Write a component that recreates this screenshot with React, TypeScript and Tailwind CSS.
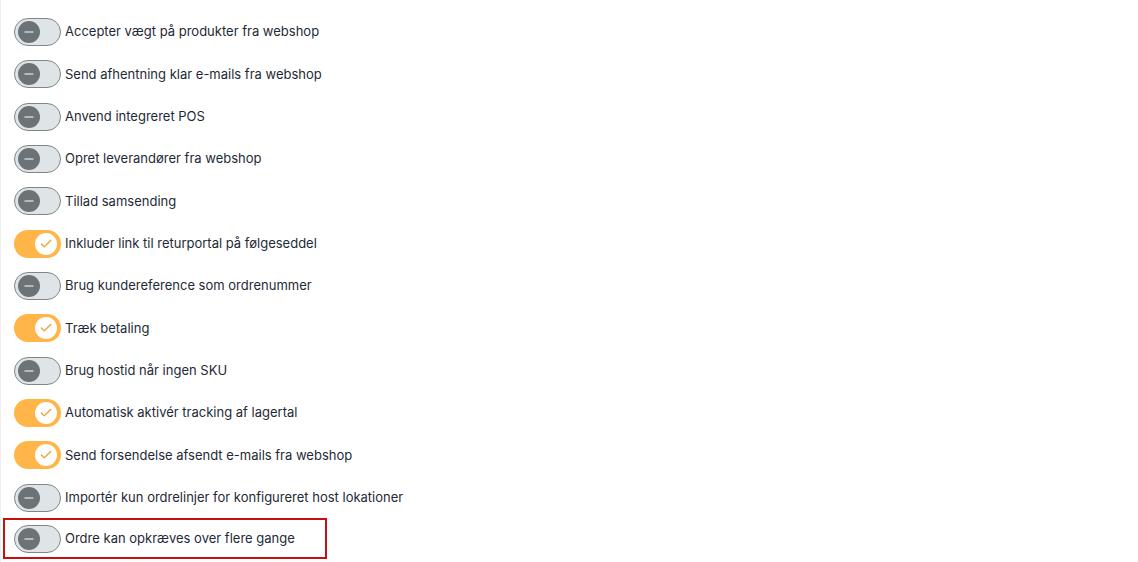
import { Check, Minus } from "lucide-react";

const settings = [
  { label: "Accepter vægt på produkter fra webshop", on: false },
  { label: "Send afhentning klar e-mails fra webshop", on: false },
  { label: "Anvend integreret POS", on: false },
  { label: "Opret leverandører fra webshop", on: false },
  { label: "Tillad samsending", on: false },
  { label: "Inkluder link til returportal på følgeseddel", on: true },
  { label: "Brug kundereference som ordrenummer", on: false },
  { label: "Træk betaling", on: true },
  { label: "Brug hostid når ingen SKU", on: false },
  { label: "Automatisk aktivér tracking af lagertal", on: true },
  { label: "Send forsendelse afsendt e-mails fra webshop", on: true },
  { label: "Importér kun ordrelinjer for konfigureret host lokationer", on: false },
];

const Toggle = ({ on }: { on: boolean }) =>
  on ? (
    <div className="w-[47px] h-[28px] rounded-full bg-[#ffb547] flex items-center justify-end pr-[4px] shrink-0">
      <div className="w-[22px] h-[22px] rounded-full bg-white flex items-center justify-center">
        <Check className="w-[14px] h-[14px] text-[#f39a27]" strokeWidth={2.2} />
      </div>
    </div>
  ) : (
    <div className="w-[47px] h-[28px] rounded-full bg-[#dfe4e6] border border-[#7f878a] flex items-center pl-[3px] shrink-0">
      <div className="w-[22px] h-[22px] rounded-full bg-[#6b7376] flex items-center justify-center">
        <Minus className="w-[14px] h-[14px] text-white" strokeWidth={1.8} />
      </div>
    </div>
  );

const Row = ({ label, on }: { label: string; on: boolean }) => (
  <div className="flex items-center gap-[4px] h-[28px]">
    <Toggle on={on} />
    <span className="text-[13px] text-[#1e2a35] whitespace-nowrap">{label}</span>
  </div>
);

export default function App() {
  return (
    <div
      className="w-[1138px] h-[562px] bg-white border-l border-[#eeeeee] overflow-hidden"
      style={{ fontFamily: "Inter, 'Noto Sans', sans-serif" }}
    >
      <div className="flex flex-col gap-[14.33px] pl-[13px] pt-[18px]">
        {settings.map((s) => (
          <Row key={s.label} label={s.label} on={s.on} />
        ))}
        <div className="-ml-[11px] -mt-[8px] pl-[9px] pt-[5px] pb-[4px] w-[324px] border-2 border-[#c80f0f]">
          <Row label="Ordre kan opkræves over flere gange" on={false} />
        </div>
      </div>
    </div>
  );
}
